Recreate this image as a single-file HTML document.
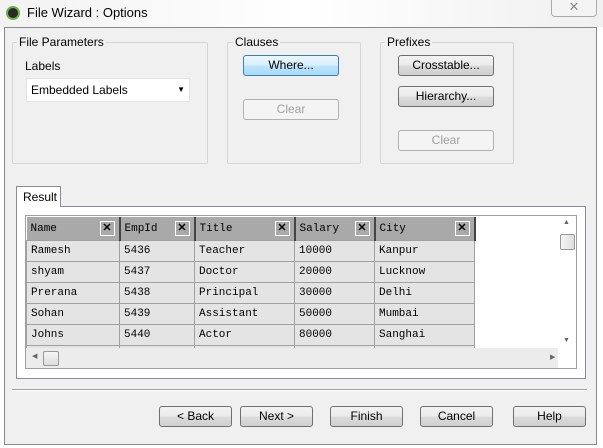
<!DOCTYPE html>
<html><head><style>
body{margin:0;width:603px;height:448px;background:#fff;font-family:"Liberation Sans",sans-serif;font-size:12px;color:#000;position:relative;overflow:hidden}
.a{position:absolute}
.win{left:4px;top:27px;width:593px;height:418px;background:#f0f0f0;border:1px solid #8a8a8a;box-sizing:border-box}
.grp{border:1px solid #d5d5d5;border-radius:2px;box-sizing:border-box}
.lbl{background:#f0f0f0;padding:0 2px}
.btn{border:1px solid #707070;border-radius:3px;box-sizing:border-box;background:linear-gradient(#f2f2f2,#ebebeb 50%,#dcdcdc 51%,#cfcfcf);text-align:center;line-height:19px}
.dis{border:1px solid #adb2b5;border-radius:3px;box-sizing:border-box;background:#f4f4f4;color:#a0a0a0;text-align:center;line-height:19px}
.mono{font-family:"Liberation Mono",monospace;font-size:11px}
table{border-collapse:collapse}
td{border:1px solid #a0a0a0;height:21px;padding:0 0 0 4px;background:#e4e4e4;box-sizing:border-box}
th{height:23px;background:#a9a9a9;text-align:left;font-weight:normal;padding:2px 0 0 4px;border-right:2px solid #444;position:relative;box-sizing:border-box}
.x{position:absolute;right:4px;top:4px;width:13px;height:13px;border:1px solid #fff;font-size:11px;line-height:13px;text-align:center;font-family:"Liberation Sans",sans-serif;font-weight:bold;background:#a9a9a9}
</style></head><body>
<div class="a" style="left:0;top:0;width:603px;height:27px;background:linear-gradient(90deg,#f2f2f2,#fff 50%,#f0f0f0)"></div>
<div class="a" style="left:6px;top:6px;width:10px;height:10px;border-radius:50%;background:#2a2a2a;border:2px solid #6ab04c"></div>
<div class="a" style="left:27px;top:5px;font-size:13px">File Wizard : Options</div>
<div class="a" style="left:551px;top:-2px;width:46px;height:19px;border:1px solid #aaa;border-radius:0 0 4px 4px;background:#f4f4f4;box-sizing:border-box;text-align:center;color:#888;font-size:13px">✕</div>
<div class="a win"></div>
<div class="a grp" style="left:12px;top:42px;width:196px;height:122px"></div>
<div class="a lbl" style="left:17px;top:35px">File Parameters</div>
<div class="a" style="left:25px;top:59px">Labels</div>
<div class="a" style="left:26px;top:78px;width:164px;height:24px;background:#fff;border:1px solid #e3e3e3;box-sizing:border-box;line-height:22px;padding-left:4px">Embedded Labels<span style="position:absolute;right:4px;top:0;font-size:8px">▼</span></div>
<div class="a grp" style="left:227px;top:42px;width:134px;height:122px"></div>
<div class="a lbl" style="left:233px;top:35px">Clauses</div>
<div class="a btn" style="left:243px;top:55px;width:96px;height:21px;border-color:#3c7fb1;background:linear-gradient(#eaf6fd,#d9f0fc 50%,#bee6fd 51%,#a7d9f5)">Where...</div>
<div class="a dis" style="left:243px;top:99px;width:96px;height:21px">Clear</div>
<div class="a grp" style="left:380px;top:42px;width:134px;height:122px"></div>
<div class="a lbl" style="left:385px;top:35px">Prefixes</div>
<div class="a btn" style="left:398px;top:55px;width:96px;height:21px">Crosstable...</div>
<div class="a btn" style="left:398px;top:86px;width:96px;height:21px">Hierarchy...</div>
<div class="a dis" style="left:398px;top:130px;width:96px;height:21px">Clear</div>
<div class="a" style="left:16px;top:206px;width:570px;height:173px;border:1px solid #898c95;box-sizing:border-box;background:#fff"></div>
<div class="a" style="left:16px;top:186px;width:45px;height:21px;border:1px solid #898c95;border-bottom:none;background:#fff;box-sizing:border-box;padding:3px 0 0 6px">Result</div>
<div class="a" style="left:25px;top:215px;width:552px;height:154px;border:1px solid #a0a0a0;box-sizing:border-box;background:#fff;overflow:hidden">
<table class="mono" style="position:absolute;left:0;top:1px">
<tr><th style="width:93px">Name<span class="x">✕</span></th><th style="width:75px">EmpId<span class="x">✕</span></th><th style="width:100px">Title<span class="x">✕</span></th><th style="width:80px">Salary<span class="x">✕</span></th><th style="width:100px">City<span class="x">✕</span></th></tr>
<tr><td>Ramesh</td><td>5436</td><td>Teacher</td><td>10000</td><td>Kanpur</td></tr>
<tr><td>shyam</td><td>5437</td><td>Doctor</td><td>20000</td><td>Lucknow</td></tr>
<tr><td>Prerana</td><td>5438</td><td>Principal</td><td>30000</td><td>Delhi</td></tr>
<tr><td>Sohan</td><td>5439</td><td>Assistant</td><td>50000</td><td>Mumbai</td></tr>
<tr><td>Johns</td><td>5440</td><td>Actor</td><td>80000</td><td>Sanghai</td></tr>
<tr><td></td><td></td><td></td><td></td><td></td></tr>
</table>
<div class="a" style="left:0;top:132px;width:532px;height:20px;background:#ececec"></div>
<div class="a" style="left:6px;top:136px;font-size:7px;color:#666">◀</div>
<div class="a" style="left:17px;top:135px;width:16px;height:15px;border:1px solid #999;border-radius:2px;background:linear-gradient(#f6f6f6,#ddd);box-sizing:border-box"></div>
<div class="a" style="left:524px;top:137px;font-size:7px;color:#666">▶</div>
<div class="a" style="left:532px;top:0;width:19px;height:152px;background:#fff"></div>
<div class="a" style="left:537px;top:3px;font-size:7px;color:#666">▲</div>
<div class="a" style="left:534px;top:18px;width:15px;height:16px;border:1px solid #999;border-radius:2px;background:linear-gradient(90deg,#f6f6f6,#ddd);box-sizing:border-box"></div>
<div class="a" style="left:537px;top:121px;font-size:7px;color:#666">▼</div>
</div>
<div class="a" style="left:12px;top:389px;width:575px;height:1px;background:#a0a0a0;border-bottom:1px solid #fff"></div>
<div class="a btn" style="left:159px;top:406px;width:73px;height:21px">&lt; Back</div>
<div class="a btn" style="left:240px;top:406px;width:73px;height:21px">Next &gt;</div>
<div class="a btn" style="left:330px;top:406px;width:73px;height:21px">Finish</div>
<div class="a btn" style="left:420px;top:406px;width:73px;height:21px">Cancel</div>
<div class="a btn" style="left:513px;top:406px;width:73px;height:21px">Help</div>
</body></html>
